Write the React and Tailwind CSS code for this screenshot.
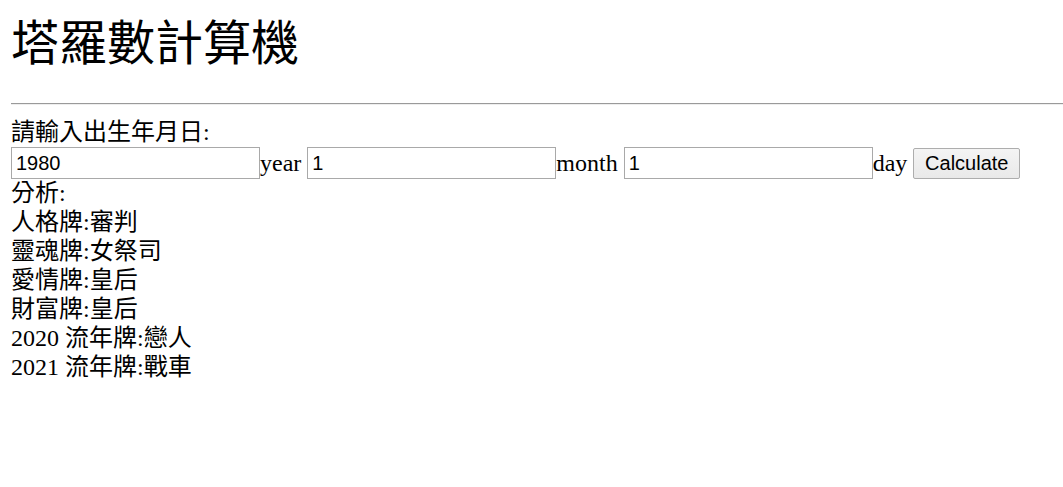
export default function App() {
  const lines = [
    "人格牌:審判",
    "靈魂牌:女祭司",
    "愛情牌:皇后",
    "財富牌:皇后",
    "2020 流年牌:戀人",
    "2021 流年牌:戰車",
  ];
  return (
    <div
      className="min-h-[487px] bg-white pl-[11px] pt-[16px] text-black font-['Liberation_Serif','Noto_Sans_CJK_TC',serif]"
    >
      <h1 className="m-0 text-[48px] leading-[56px] font-normal">塔羅數計算機</h1>
      <hr className="mt-[31px] mb-[13px] h-0 border-0 border-t border-b border-t-[#9a9a9a] border-b-[#eeeeee]" />
      <div className="text-[24px] leading-[29px]">
        <div>請輸入出生年月日:</div>
        <div className="flex h-[32px] items-center whitespace-nowrap">
          <input
            defaultValue="1980"
            className="box-border h-[32px] w-[249px] border border-[#a9a9a9] bg-white px-[4px] text-[20px] font-['Liberation_Sans',sans-serif] outline-none"
          />
          <span>year</span>
          <input
            defaultValue="1"
            className="ml-[6px] box-border h-[32px] w-[249px] border border-[#a9a9a9] bg-white px-[4px] text-[20px] font-['Liberation_Sans',sans-serif] outline-none"
          />
          <span>month</span>
          <input
            defaultValue="1"
            className="ml-[6px] box-border h-[32px] w-[249px] border border-[#a9a9a9] bg-white px-[4px] text-[20px] font-['Liberation_Sans',sans-serif] outline-none"
          />
          <span>day</span>
          <button className="ml-[6px] box-border h-[31px] w-[107px] rounded-[2px] border border-[#adadad] bg-gradient-to-b from-[#f4f4f4] to-[#e9e9e9] text-[20px] leading-[29px] font-['Liberation_Sans',sans-serif] text-black">
            Calculate
          </button>
        </div>
        <div>分析:</div>
        {lines.map((l) => (
          <div key={l}>{l}</div>
        ))}
      </div>
    </div>
  );
}
